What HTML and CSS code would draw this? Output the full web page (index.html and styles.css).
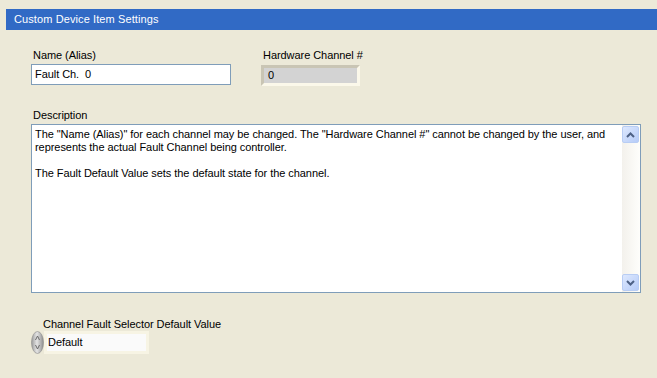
FILE: index.html
```html
<!DOCTYPE html>
<html lang="en">
<head>
  <meta charset="UTF-8" />
  <title>Custom Device Item Settings</title>
  <link rel="stylesheet" href="styles.css">
</head>
<body>
  <div class="titlebar">Custom Device Item Settings</div>

  <div class="top-row">
    <div class="field name-field">
      <label class="label">Name (Alias)</label>
      <div class="text-input">Fault Ch.&nbsp; 0</div>
    </div>
    <div class="field hw-field">
      <label class="label">Hardware Channel #</label>
      <div class="indicator"><span>0</span></div>
    </div>
  </div>

  <div class="field desc-field">
    <label class="label">Description</label>
    <div class="textarea">
      <div class="textarea-text">
        <p>The "Name (Alias)" for each channel may be changed. The "Hardware Channel #" cannot be changed by the user, and represents the actual Fault Channel being controller.</p>
        <p>The Fault Default Value sets the default state for the channel.</p>
      </div>
      <div class="scrollbar">
        <div class="scroll-btn">
          <svg width="9" height="6" viewBox="0 0 9 6"><path d="M1 5 L4.5 1.5 L8 5" fill="none" stroke="#4d6185" stroke-width="2"/></svg>
        </div>
        <div class="scroll-track"></div>
        <div class="scroll-btn">
          <svg width="9" height="6" viewBox="0 0 9 6"><path d="M1 1 L4.5 4.5 L8 1" fill="none" stroke="#4d6185" stroke-width="2"/></svg>
        </div>
      </div>
    </div>
  </div>

  <div class="field ring-field">
    <label class="label ring-label">Channel Fault Selector Default Value</label>
    <div class="ring">
      <div class="spinner">
        <svg width="13" height="23" viewBox="0 0 13 23">
          <defs>
            <linearGradient id="sg" x1="0" x2="1" y1="0" y2="0">
              <stop offset="0" stop-color="#9c9c9c"/>
              <stop offset="0.45" stop-color="#e4e4e4"/>
              <stop offset="1" stop-color="#8e8e8e"/>
            </linearGradient>
          </defs>
          <ellipse cx="6.5" cy="11.5" rx="6" ry="11" fill="url(#sg)" stroke="#8a8a8a" stroke-width="0.6"/>
          <path d="M4.5 9 L6.5 5 L8.5 9" fill="none" stroke="#6a6a6a" stroke-width="1"/>
          <path d="M4.5 14 L6.5 18 L8.5 14" fill="none" stroke="#6a6a6a" stroke-width="1"/>
        </svg>
      </div>
      <div class="ring-box"><span>Default</span></div>
    </div>
  </div>
</body>
</html>
```

FILE: styles.css
```css
body {
  margin: 0;
  background-color: #ece9d8;
  font-family: 'Liberation Sans', Arial, sans-serif;
  font-size: 11px;
  letter-spacing: -0.06px;
  color: #000;
}
.titlebar {
  margin: 9px 0 0 6px;
  height: 21px;
  line-height: 21px;
  padding-left: 8px;
  background-color: #316ac5;
  color: #fff;
  font-size: 11px;
  letter-spacing: 0.1px;
}
.field {
  display: flex;
  flex-direction: column;
}
.label {
  display: block;
  height: 13px;
  line-height: 13px;
  padding-left: 2px;
  margin-bottom: 2px;
  white-space: nowrap;
}
.top-row {
  display: flex;
  margin: 19px 0 0 31px;
}
.name-field {
  width: 200px;
}
.text-input {
  height: 19px;
  line-height: 19px;
  border: 1px solid #7f9db9;
  background: #fff;
  padding-left: 3px;
}
.hw-field {
  margin-left: 30px;
  width: 99px;
}
.hw-field .label {
  margin-bottom: 3px;
}
.indicator {
  height: 15px;
  border-style: solid;
  border-width: 3px;
  border-color: #c9c5b4 #fbf8ea #fbf8ea #c9c5b4;
  background: #d3d3d3;
  line-height: 15px;
  padding-left: 4px;
}
.desc-field {
  margin: 23px 0 0 31px;
  width: 610px;
}
.textarea {
  display: flex;
  height: 167px;
  border: 1px solid #7f9db9;
  background: #fff;
}
.textarea-text {
  flex: 1;
  padding: 3px 0 0 3px;
  line-height: 13px;
}
.textarea-text p {
  margin: 0 0 13px 0;
}
.scrollbar {
  width: 17px;
  display: flex;
  flex-direction: column;
  padding: 1px 1px 1px 0;
  background: linear-gradient(to right, #f3f1ec, #fefefb);
}
.scroll-btn {
  height: 17px;
  box-sizing: border-box;
  border: 1px solid #b8cdf4;
  border-radius: 2px;
  background: linear-gradient(to bottom right, #dde8fe, #b6ccf8);
  display: flex;
  align-items: center;
  justify-content: center;
}
.scroll-track {
  flex: 1;
}
.ring-field {
  margin: 25px 0 0 31px;
}
.ring-label {
  padding-left: 12px;
  margin-bottom: 0;
}
.ring {
  display: flex;
  height: 23px;
}
.spinner {
  width: 13px;
  height: 23px;
}
.ring-box {
  width: 99px;
  height: 17px;
  border-style: solid;
  border-width: 3px;
  border-color: #f7f4e4;
  background: #fafafa;
  line-height: 17px;
}
.ring-box span {
  padding-left: 1px;
}
```
